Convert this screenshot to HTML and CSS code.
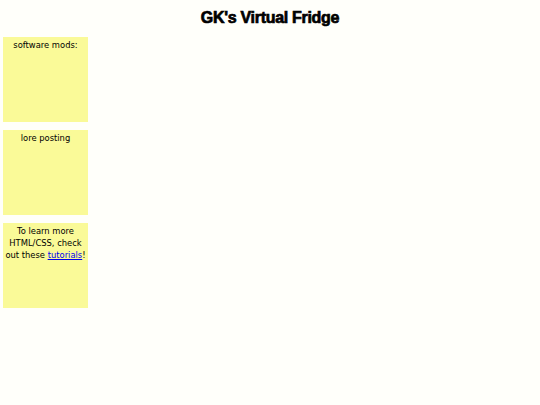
FILE: index.html
```html
<!DOCTYPE html>
<html>
<head>
<meta charset="utf-8">
<link rel="stylesheet" href="styles.css">
</head>
<body>
<h1 class="title">GK's Virtual Fridge</h1>
<div class="notes">
  <div class="note">software mods:</div>
  <div class="note">lore posting</div>
  <div class="note">To learn more HTML/CSS, check out these <a href="#">tutorials</a>!</div>
</div>
</body>
</html>
```
FILE: styles.css
```css
html, body {
  margin: 0;
  padding: 0;
  background: #fffffa;
}
body {
  padding: 8px 0 0 3px;
}
.title {
  margin: 0 3px 9px 0;
  font-family: "Liberation Sans", Arial, sans-serif;
  font-weight: 900;
  font-size: 16px;
  line-height: 20px;
  text-align: center;
  color: #000;
  letter-spacing: -0.3px;
  -webkit-text-stroke: 0.7px #000;
}
.notes {
  display: flex;
  flex-direction: column;
  gap: 8px;
}
.note {
  width: 85px;
  height: 82px;
  padding: 2px 0 1px 0;
  background: #fafa98;
  font-family: "DejaVu Sans Condensed", "DejaVu Sans", sans-serif;
  font-size: 9.3px;
  line-height: 12px;
  text-align: center;
  color: #000;
}
.note a {
  color: #0000ee;
  text-decoration: underline;
}
```
